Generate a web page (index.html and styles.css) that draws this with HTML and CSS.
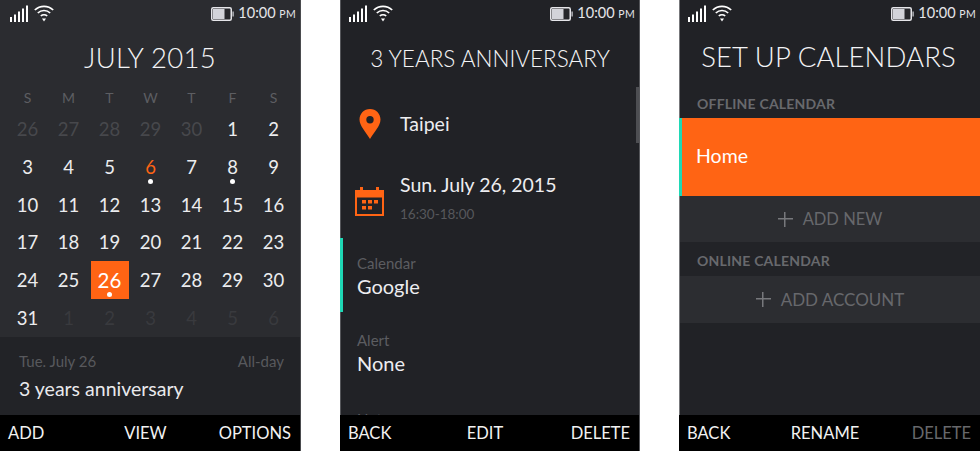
FILE: index.html
```html
<!DOCTYPE html>
<html lang="en">
<head>
<meta charset="utf-8">
<title>Calendar screens</title>
<link rel="stylesheet" href="styles.css">
</head>
<body>
<svg class="sprite" width="0" height="0" aria-hidden="true">
  <symbol id="signal" viewBox="0 0 18 18"><path fill="#fff" d="M0 12h2v5H0zM4 9.500h2V17H4zM8 6.500h2V17H8zM12 3.500h2V17h-2zM16 .5h2V17h-2z"/></symbol>
  <symbol id="wifi" viewBox="0 0 20 18"><g fill="none" stroke="#fff" stroke-width="1.700"><path d="M.8 6a13.300 13.300 0 0 1 18.400 0"/><path d="M3.800 9a9 9 0 0 1 12.400 0"/><path d="M6.800 12a4.700 4.700 0 0 1 6.400 0"/></g><path fill="#fff" d="M8 14.500h4L10 17.500z"/></symbol>
  <symbol id="battery" viewBox="0 0 23 14"><rect x=".75" y=".75" width="19.500" height="12.500" rx="1.500" fill="#26272b" stroke="#e6e6ea" stroke-width="1.500"/><rect x="2" y="2" width="11.500" height="10" fill="#d3d4da"/><rect x="21.500" y="4.500" width="1.200" height="5" fill="#d3d4da"/></symbol>
</svg>
<main class="screens">
  <section class="phone phone-month">
    <div class="status">
      <div class="status-icons"><svg class="i-signal"><use href="#signal"/></svg><svg class="i-wifi"><use href="#wifi"/></svg></div>
      <div class="status-right"><svg class="i-battery"><use href="#battery"/></svg><span class="clock">10:00 <small>PM</small></span></div>
    </div>
    <div class="content">
      <h1 class="title title-month">JULY 2015</h1>
      <div class="weekdays"><span>S</span><span>M</span><span>T</span><span>W</span><span>T</span><span>F</span><span>S</span></div>
      <div class="days">
        <span class="off">26</span><span class="off">27</span><span class="off">28</span><span class="off">29</span><span class="off">30</span><span>1</span><span>2</span>
        <span>3</span><span>4</span><span>5</span><span class="today dot">6</span><span>7</span><span class="dot">8</span><span>9</span>
        <span>10</span><span>11</span><span>12</span><span>13</span><span>14</span><span>15</span><span>16</span>
        <span>17</span><span>18</span><span>19</span><span>20</span><span>21</span><span>22</span><span>23</span>
        <span>24</span><span>25</span><span class="selected dot">26</span><span>27</span><span>28</span><span>29</span><span>30</span>
        <span>31</span><span class="next">1</span><span class="next">2</span><span class="next">3</span><span class="next">4</span><span class="next">5</span><span class="next">6</span>
      </div>
      <div class="agenda">
        <div class="agenda-meta"><span>Tue. July 26</span><span>All-day</span></div>
        <div class="agenda-name">3 years anniversary</div>
      </div>
    </div>
    <div class="softkeys"><span>ADD</span><span>VIEW</span><span>OPTIONS</span></div>
  </section>

  <section class="phone phone-event">
    <div class="status">
      <div class="status-icons"><svg class="i-signal"><use href="#signal"/></svg><svg class="i-wifi"><use href="#wifi"/></svg></div>
      <div class="status-right"><svg class="i-battery"><use href="#battery"/></svg><span class="clock">10:00 <small>PM</small></span></div>
    </div>
    <div class="content">
      <i class="scrollbar"></i>
      <h1 class="title title-event">3 YEARS ANNIVERSARY</h1>
      <div class="icon-row row-place">
        <div class="icon-cell">
          <svg class="i-pin" viewBox="0 0 22 30"><path fill="#ff6414" fill-rule="evenodd" d="M11 0C5 0 .500 4.700.500 10.500c0 6.500 6.500 12.500 10.500 19.500 4-7 10.500-13 10.500-19.500C21.500 4.700 17 0 11 0zm0 7a3.700 3.700 0 1 1 0 7.400A3.700 3.700 0 0 1 11 7z"/></svg>
        </div>
        <div class="row-main">Taipei</div>
      </div>
      <div class="icon-row row-date">
        <div class="icon-cell">
          <svg class="i-cal" viewBox="0 0 29 29"><g fill="#ff6414"><path d="M5 0h3v4H5zM21 0h3v4h-3z"/><path fill-rule="evenodd" d="M0 3h29v26H0zm2 7.500V27h25V10.500z"/><path d="M7 13h4v3.500H7zM13 13h4v3.500h-4zM19 13h4v3.500h-4zM7 19h4v3.500H7zM13 19h4v3.500h-4z"/></g></svg>
        </div>
        <div class="date-text">
          <div class="row-main">Sun. July 26, 2015</div>
          <div class="row-sub">16:30-18:00</div>
        </div>
      </div>
      <div class="field field-accent"><div class="field-label">Calendar</div><div class="field-value">Google</div></div>
      <div class="field"><div class="field-label">Alert</div><div class="field-value">None</div></div>
      <div class="field field-note"><div class="field-label">Note</div></div>
    </div>
    <div class="softkeys"><span>BACK</span><span>EDIT</span><span>DELETE</span></div>
  </section>

  <section class="phone phone-setup">
    <div class="status">
      <div class="status-icons"><svg class="i-signal"><use href="#signal"/></svg><svg class="i-wifi"><use href="#wifi"/></svg></div>
      <div class="status-right"><svg class="i-battery"><use href="#battery"/></svg><span class="clock">10:00 <small>PM</small></span></div>
    </div>
    <div class="content">
      <h1 class="title title-setup">SET UP CALENDARS</h1>
      <div class="section-head head-offline">OFFLINE CALENDAR</div>
      <div class="home-row">Home</div>
      <div class="add-row add-new"><span class="plus"></span>ADD NEW</div>
      <div class="section-head head-online">ONLINE CALENDAR</div>
      <div class="add-row add-account"><span class="plus"></span>ADD ACCOUNT</div>
    </div>
    <div class="softkeys"><span>BACK</span><span>RENAME</span><span class="disabled">DELETE</span></div>
  </section>
</main>
</body>
</html>
```

FILE: styles.css
```css
* { box-sizing: border-box; }
html, body { margin: 0; height: 451px; overflow: hidden; background: #fff; }
body { font-family: "Lato", "Liberation Sans", sans-serif; color: #e9e9ec; }
.sprite { position: absolute; }

.screens { display: flex; justify-content: space-between; height: 451px; }
.phone { width: 301px; height: 451px; display: flex; flex-direction: column; background: #212226; overflow: hidden; }
.phone-event { width: 300px; border-right: 1px solid #55565a; box-shadow: inset 1px 0 0 #55565a; }
.phone-setup { box-shadow: inset 1px 0 0 #77787b; }
.phone-month { background: #2b2c30; border-right: 1px solid #4a4b4e; }

.status { flex: none; height: 29px; display: flex; justify-content: space-between; align-items: flex-start; padding: 5px 4px 0 9px; }
.phone-month .status { padding-left: 10px; }
.status-icons { display: flex; gap: 6px; }
.i-signal { width: 18px; height: 18px; }
.i-wifi { width: 20px; height: 18px; margin-top: -1px; }
.status-right { display: flex; align-items: center; gap: 4px; margin-top: 1px; }
.i-battery { width: 23px; height: 14px; }
.clock { font-size: 14.500px; line-height: 14px; color: #e6e6e9; white-space: nowrap; }
.clock small { font-size: 10.500px; letter-spacing: .3px; }

.content { flex: 1; min-height: 0; position: relative; overflow: hidden; }
.phone-event .content, .phone-setup .content { padding-left: 1px; }
.title { margin: 0; font-weight: 300; text-align: center; color: #f4f4f6; white-space: nowrap; }
.title-month { font-size: 27.500px; line-height: 58px; height: 56px; letter-spacing: .3px; }
.title-event { font-size: 22.500px; line-height: 60px; height: 60px; }
.title-setup { font-size: 27.500px; line-height: 56px; height: 60px; letter-spacing: .1px; padding-right: 3px; }

/* month */
.weekdays, .days { display: grid; grid-template-columns: repeat(7, 41px); padding-left: 7px; text-align: center; }
.weekdays { height: 25px; line-height: 26px; font-size: 14px; color: #5d5e62; }
.days { grid-auto-rows: 37.750px; margin-top: .25px; font-size: 18.500px; color: #ececee; }
.days span { display: flex; align-items: center; justify-content: center; position: relative; }
.days .off { color: #47484c; }
.days .next { color: #393a3e; }
.days .today { color: #ff6414; }
.dot::after { content: ""; position: absolute; left: 50%; top: 30.500px; width: 5px; height: 5px; margin-left: -2.500px; border-radius: 50%; background: #fff; }
.days .selected { background: #ff6414; color: #fff; margin: 0 1.500px; font-size: 20.500px; }
.agenda { height: 78.250px; background: #222327; padding: 14px 16px 0 19px; }
.agenda-meta { display: flex; justify-content: space-between; font-size: 15px; line-height: 20px; color: #58595d; }
.agenda-name { font-size: 19.500px; line-height: 26px; margin-top: 5px; color: #e9e9ec; }

/* event */
.scrollbar { position: absolute; right: 0; top: 58px; width: 3px; height: 56px; background: #4d4e52; }
.icon-row { display: flex; align-items: center; }
.icon-cell { width: 59px; flex: none; display: flex; justify-content: center; padding-right: 2px; }
.row-place { height: 48px; margin-top: 11px; }
.i-pin { width: 22px; height: 30px; }
.i-cal { width: 29px; height: 29px; }
.row-date { height: 59px; margin-top: 19px; align-items: flex-start; }
.row-date .icon-cell { margin-top: 20px; }
.date-text { padding-top: 5px; }
.row-main { font-size: 19.500px; line-height: 26px; color: #ededf0; }
.row-sub { font-size: 13.500px; line-height: 18px; margin-top: 7px; color: #57585c; }
.field { padding-left: 16px; height: 78px; padding-top: 17px; position: relative; }
.field-accent { margin: 12px 0 0 -1px; padding-left: 17px; height: 75px; padding-top: 15px; }
.field-accent::before { content: ""; position: absolute; left: 0; top: 0; bottom: 1px; width: 3px; background: #1fd8b5; }
.field-note { padding-top: 18px; }
.field-label { font-size: 15px; line-height: 20px; color: #5c5d61; }
.field-value { font-size: 20px; line-height: 26px; color: #ededf0; }

/* setup */
.section-head { font-size: 14px; font-weight: 700; color: #68696d; letter-spacing: .2px; padding-left: 17px; }
.head-offline { height: 29px; line-height: 30px; }
.head-online { height: 34px; line-height: 38px; background: #222327; }
.home-row { height: 78px; line-height: 76px; margin-left: -1px; background: #ff6414; border-left: 3px solid #1fd8b5; padding-left: 14px; font-size: 19.500px; color: #fff; }
.add-row { display: flex; align-items: center; justify-content: center; background: #2c2d31; color: #67686c; font-size: 17px; }
.add-new { height: 46px; font-size: 16.500px; }
.add-account { height: 47px; padding-bottom: 1px; }
.plus { width: 15px; height: 15px; margin-right: 10px; background: linear-gradient(#77787c, #77787c) center/100% 1.500px no-repeat, linear-gradient(#77787c, #77787c) center/1.500px 100% no-repeat; }

/* footer */
.softkeys { flex: none; height: 36px; background: #000; display: grid; grid-template-columns: 1fr auto 1fr; align-items: center; padding: 0 9px 0 8px; font-size: 16.500px; color: #f2f2f2; }
.softkeys span:nth-child(2) { margin-right: 8px; }
.softkeys span:nth-child(3) { text-align: right; }
.softkeys .disabled { color: #67686b; }
```
